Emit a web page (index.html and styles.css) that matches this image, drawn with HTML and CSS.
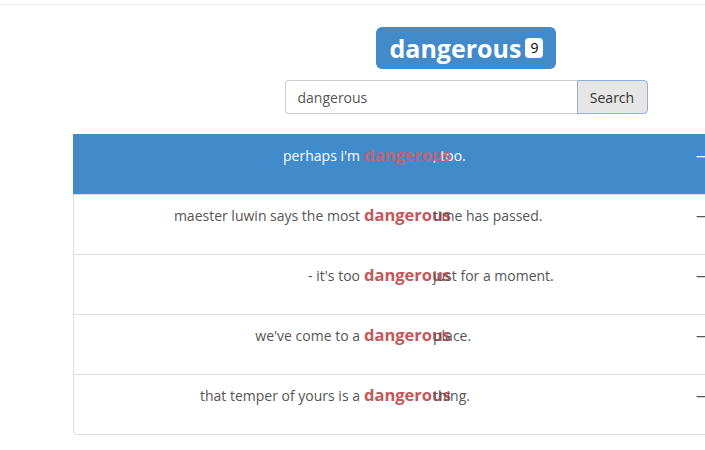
FILE: index.html
```html
<!DOCTYPE html>
<html lang="en">
<head>
  <meta charset="UTF-8">
  <title>dangerous - search</title>
  <link rel="stylesheet" href="styles.css">
</head>
<body>
  <div class="topbar"></div>

  <div class="main">
    <div class="title-wrap">
      <h1 class="title">dangerous<span class="count">9</span></h1>
    </div>

    <div class="search">
      <input type="text" value="dangerous">
      <button>Search</button>
    </div>

    <ul class="results">
      <li class="row active">
        <span class="pre">perhaps i'm</span>
        <span class="kw">dangerous</span>
        <span class="post">, too.</span>
        <span class="dash">&mdash;</span>
      </li>
      <li class="row">
        <span class="pre">maester luwin says the most</span>
        <span class="kw">dangerous</span>
        <span class="post">time has passed.</span>
        <span class="dash">&mdash;</span>
      </li>
      <li class="row">
        <span class="pre">- it's too</span>
        <span class="kw">dangerous</span>
        <span class="post">just for a moment.</span>
        <span class="dash">&mdash;</span>
      </li>
      <li class="row">
        <span class="pre">we've come to a</span>
        <span class="kw">dangerous</span>
        <span class="post">place.</span>
        <span class="dash">&mdash;</span>
      </li>
      <li class="row">
        <span class="pre">that temper of yours is a</span>
        <span class="kw">dangerous</span>
        <span class="post">thing.</span>
        <span class="dash">&mdash;</span>
      </li>
    </ul>
  </div>
</body>
</html>
```

FILE: styles.css
```css
html, body {
  overflow: hidden;
}
body {
  font-family: "Open Sans", sans-serif;
  font-size: 14px;
  color: #555;
  background: #fff;
  margin: 0;
}
.topbar {
  height: 4px;
  border-bottom: 1px solid #eee;
}
.main {
  width: 786px;
  margin-left: 73px;
}
.title-wrap {
  text-align: center;
  padding-top: 22px;
}
.title {
  display: inline-flex;
  align-items: center;
  gap: 4px;
  margin: 0;
  height: 42px;
  padding: 0 13px 0 14px;
  background: #428bca;
  color: #fff;
  font-size: 25px;
  font-weight: 700;
  border-radius: 6px;
  box-sizing: border-box;
}
.count {
  background: #fff;
  color: #000;
  font-size: 14px;
  font-weight: 400;
  border-radius: 4px;
  padding: 0 5px;
  line-height: 20px;
}
.search {
  display: flex;
  width: 363px;
  margin: 11px auto 0;
}
.search input {
  flex: 1;
  height: 34px;
  box-sizing: border-box;
  border: 1px solid #ccc;
  border-right: none;
  border-radius: 4px 0 0 4px;
  padding: 0 12px;
  font-family: inherit;
  font-size: 14px;
  color: #555;
}
.search button {
  width: 71px;
  height: 34px;
  border: 1px solid #8fb0d9;
  border-radius: 0 4px 4px 0;
  background: #e6e6e6;
  font-family: inherit;
  font-size: 14px;
  color: #333;
}
.results {
  list-style: none;
  margin: 20px 0 0;
  padding: 0;
  border: 1px solid #ddd;
  border-radius: 4px;
}
.row {
  display: flex;
  align-items: baseline;
  height: 60px;
  box-sizing: border-box;
  padding: 10px 15px;
  border-top: 1px solid #ddd;
  line-height: 20px;
}
.row:first-child {
  border-top: none;
}
.row.active {
  background: #428bca;
  color: #fff;
  margin: -1px -1px 0;
  padding-left: 16px;
  height: 60px;
  padding-top: 11px;
}
.pre {
  width: 271px;
  text-align: right;
  white-space: nowrap;
}
.kw {
  width: 69px;
  margin-left: 4px;
  white-space: nowrap;
  font-weight: 700;
  font-size: 16.5px;
  color: #c5565a;
}
.active .kw {
  color: #d0606a;
  opacity: 0.85;
}
.post {
  width: 263px;
  white-space: nowrap;
}
.dash {
  color: inherit;
}
```
